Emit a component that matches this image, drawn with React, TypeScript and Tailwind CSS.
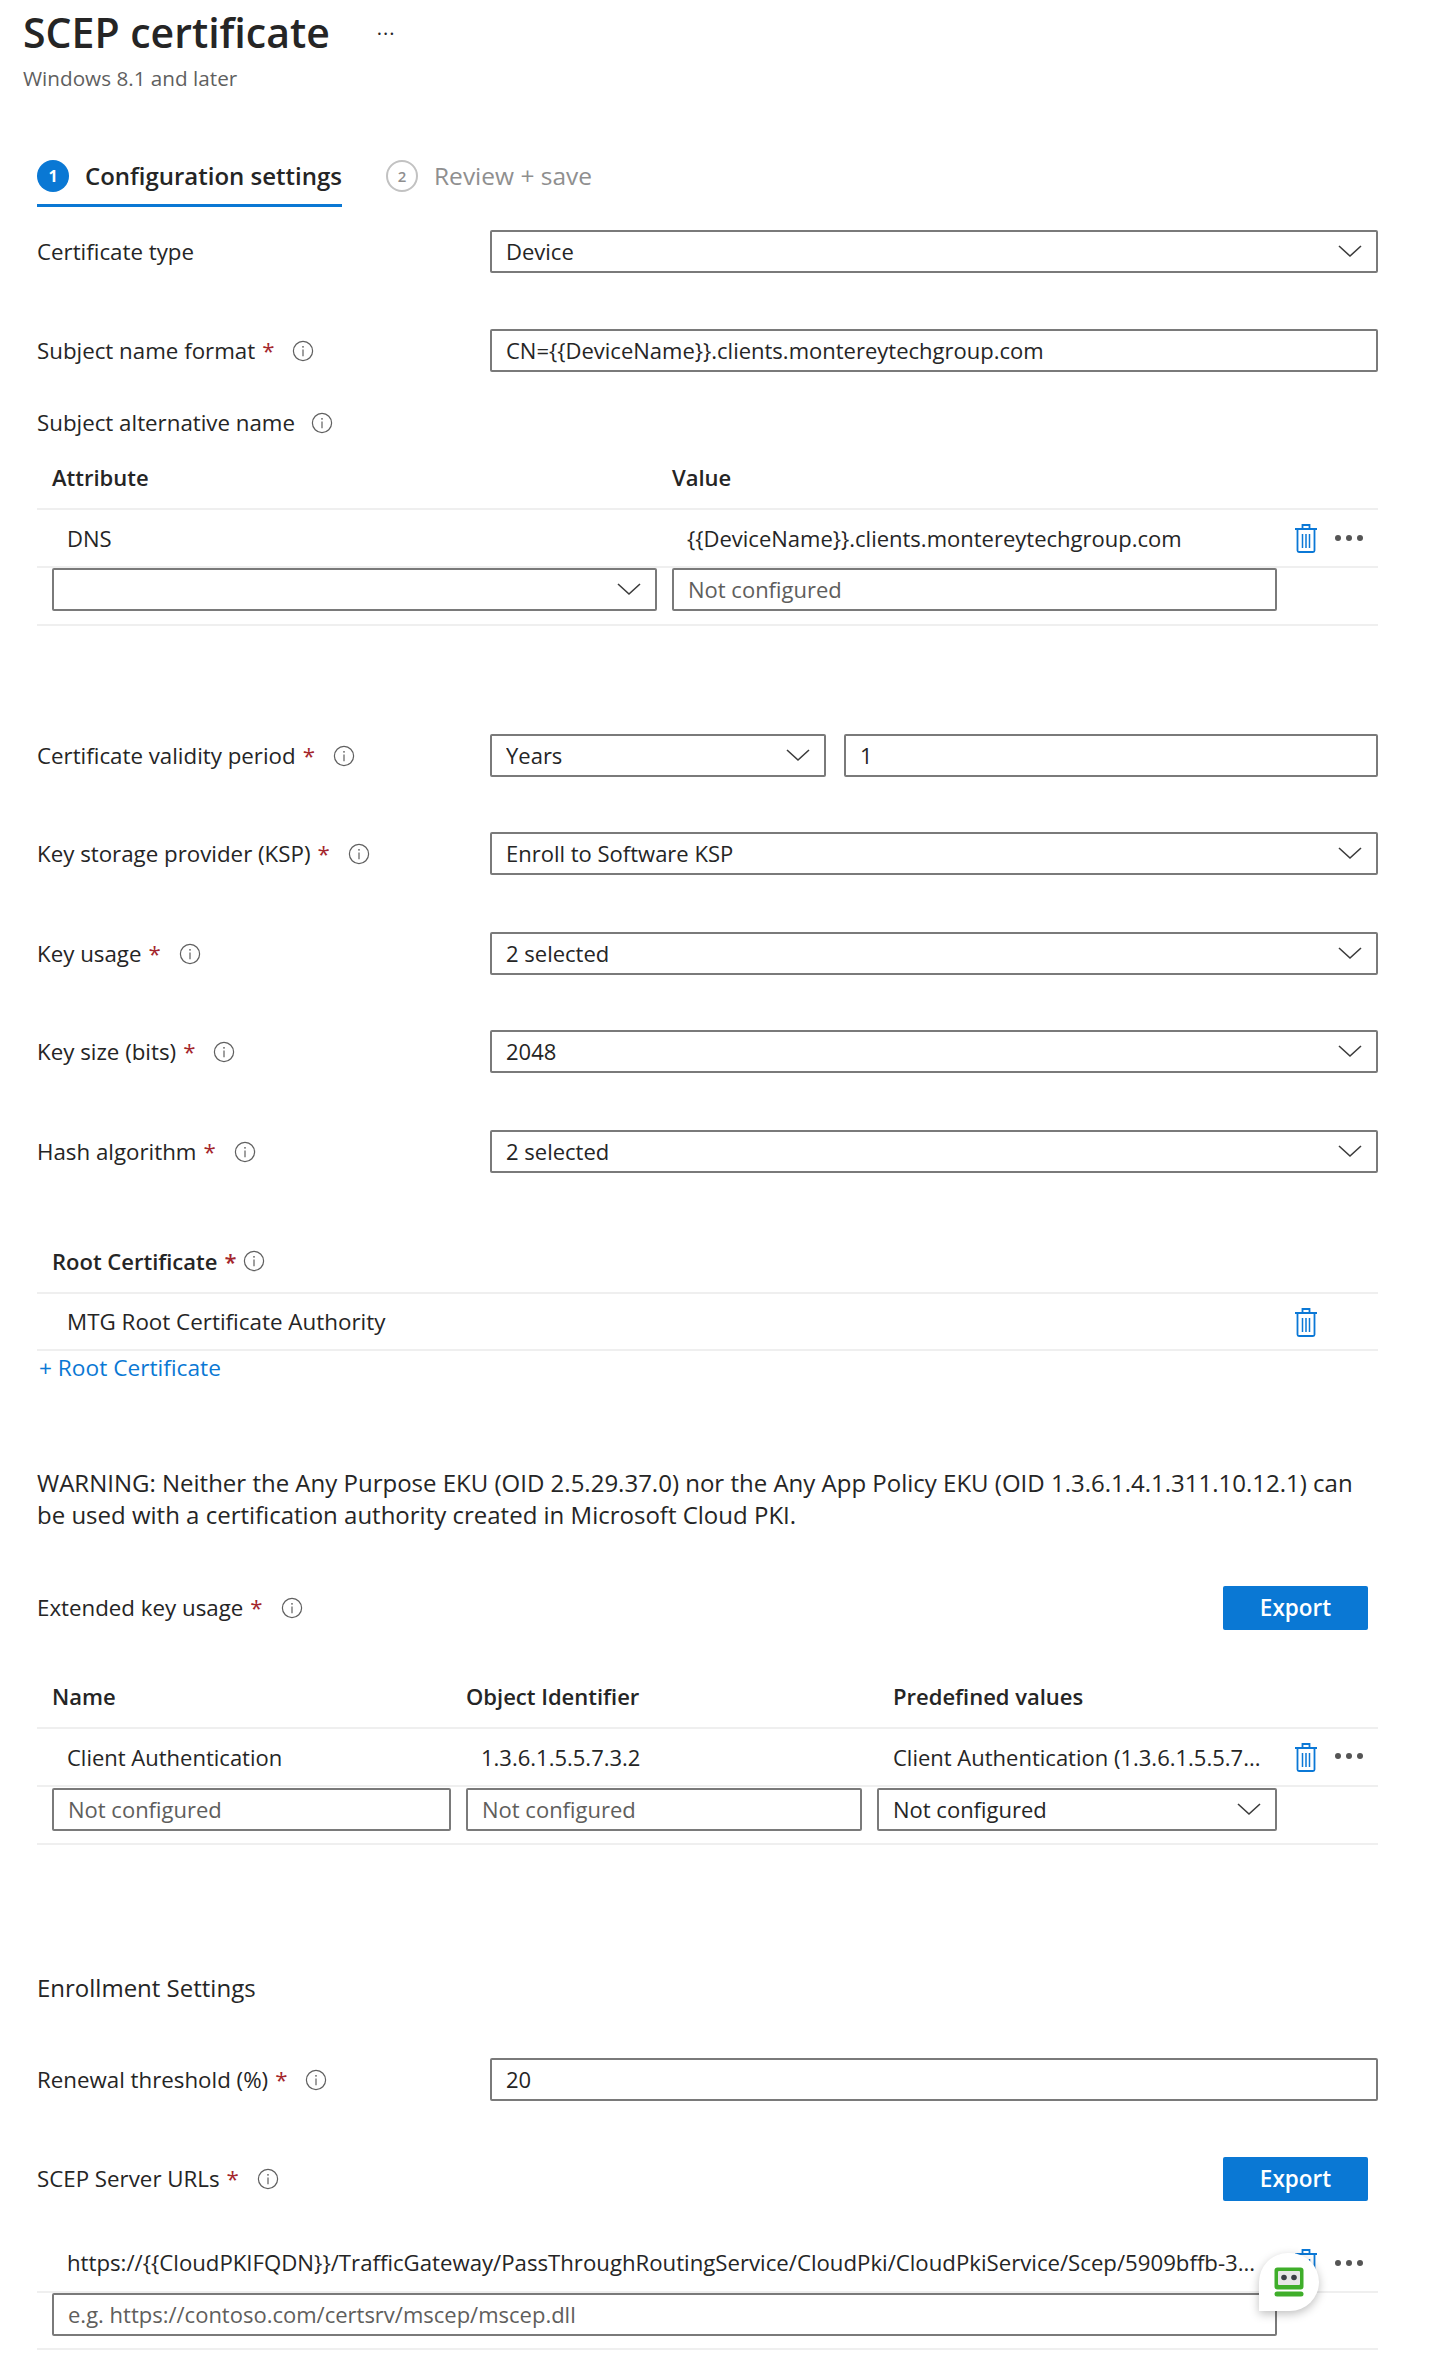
import React from "react";

const Info = ({ className = "" }: { className?: string }) => (
  <svg width="22" height="22" viewBox="0 0 22 22" fill="none" className={`shrink-0 ${className}`}>
    <circle cx="11" cy="11" r="9.6" stroke="#5f5f5f" strokeWidth="1.2" />
    <circle cx="11" cy="6.8" r="0.9" fill="#5f5f5f" />
    <path d="M11 9.6v6.6" stroke="#5f5f5f" strokeWidth="1.2" />
  </svg>
);

const Chevron = () => (
  <svg width="26" height="14" viewBox="0 0 26 14" fill="none" className="shrink-0">
    <path d="M2 2l11 10L24 2" stroke="#3b3b3b" strokeWidth="1.6" />
  </svg>
);

const Trash = () => (
  <svg width="24" height="30" viewBox="0 0 24 30" fill="none" className="shrink-0">
    <path d="M1 6h22M8.5 6V2h7v4M3.5 6v21.5a1.5 1.5 0 0 0 1.5 1.5h14a1.5 1.5 0 0 0 1.5-1.5V6" stroke="#0b78d6" strokeWidth="1.8" />
    <path d="M8.5 11v14M12 11v14M15.5 11v14" stroke="#0b78d6" strokeWidth="1.5" />
  </svg>
);

const Dots = () => (
  <svg width="30" height="8" viewBox="0 0 30 8" className="shrink-0">
    <circle cx="4" cy="4" r="3" fill="#555" />
    <circle cx="15" cy="4" r="3" fill="#555" />
    <circle cx="26" cy="4" r="3" fill="#555" />
  </svg>
);

const Req = () => <span className="ml-[7px] text-[#a4262c]">*</span>;

const Box = ({ children, className = "", muted = false, chevron = false }: { children?: React.ReactNode; className?: string; muted?: boolean; chevron?: boolean }) => (
  <div className={`flex h-[43px] items-center justify-between rounded-[2px] border-2 border-[#7a7a7a] bg-white pb-[2px] pl-[14px] pr-[13px] ${muted ? "text-[#605e5c]" : "text-[#252525]"} ${className}`}>
    <span className="truncate">{children}</span>
    {chevron && <Chevron />}
  </div>
);

const Field = ({ label, req, gap = 18, info = true, className = "", children }: { label: string; req?: boolean; gap?: number; info?: boolean; className?: string; children: React.ReactNode }) => (
  <div className={`grid grid-cols-[453px_888px] items-center ${className}`}>
    <div className="flex items-center text-[22.3px]">
      <span>{label}</span>
      {req && <Req />}
      {info && <span style={{ width: gap }} />}
      {info && <Info />}
    </div>
    <div className="text-[22px]">{children}</div>
  </div>
);

const Divider = () => <div className="h-[2px] bg-[#efefef]" />;

const ExportBtn = () => (
  <div className="flex h-[44px] w-[145px] items-center justify-center rounded-[2px] bg-[#0a78d4] text-[22.5px] font-semibold text-white">Export</div>
);

export default function App() {
  return (
    <div className="h-[2373px] w-[1435px] overflow-hidden bg-white font-['Open_Sans','Noto_Sans',sans-serif] text-[22px] leading-[28px] text-[#252525]">
      <div className="flex h-[53px] items-center pl-[23px] pt-[11px]">
        <h1 className="text-[41px] font-semibold leading-[50px]">SCEP certificate</h1>
        <span className="ml-[47px] pt-[3px] text-[20px] leading-[50px] tracking-[0.05em]">···</span>
      </div>
      <div className="pl-[23px] pt-[10px] text-[20.7px] leading-[30px] text-[#5f5f5f]">Windows 8.1 and later</div>

      <div className="ml-[37px] mt-[67px] w-[1341px]">
        <div className="flex h-[47px] items-start gap-[44px]">
          <div className="flex h-[47px] w-[305px] items-start gap-[16px] border-b-[3px] border-[#0a78d4]">
            <span className="flex h-[32px] w-[32px] items-center justify-center rounded-full bg-[#0a78d4] text-[16px] font-bold text-white">1</span>
            <span className="whitespace-nowrap text-[24px] font-semibold leading-[32px]">Configuration settings</span>
          </div>
          <div className="flex items-start gap-[16px] text-[#8f8f8f]">
            <span className="flex h-[32px] w-[32px] items-center justify-center rounded-full border-2 border-[#c2c2c2] text-[15px] font-semibold">2</span>
            <span className="text-[24.5px] leading-[32px]">Review + save</span>
          </div>
        </div>

        <Field label="Certificate type" className="mt-[23px]" info={false}>
          <Box chevron>Device</Box>
        </Field>
        <Field label="Subject name format" req className="mt-[56px]">
          <Box>{"CN={{DeviceName}}.clients.montereytechgroup.com"}</Box>
        </Field>

        <div className="mt-[37px] flex h-[28px] items-center text-[22.3px]">
          <span>Subject alternative name</span>
          <span className="w-[16px]" />
          <Info />
        </div>

        <div className="mt-[26px] grid h-[28px] grid-cols-[620px_1fr] pl-[15px] font-semibold">
          <span>Attribute</span>
          <span>Value</span>
        </div>
        <div className="mt-[17px]"><Divider /></div>
        <div className="relative flex h-[56px] items-center pl-[30px]">
          <span className="w-[620px]">DNS</span>
          <span>{"{{DeviceName}}.clients.montereytechgroup.com"}</span>
          <div className="absolute left-[1257px] top-[13px]"><Trash /></div>
          <div className="absolute left-[1297px] top-[24px]"><Dots /></div>
        </div>
        <Divider />
        <div className="grid grid-cols-[605px_605px] gap-[15px] pl-[15px]">
          <Box chevron />
          <Box muted>Not configured</Box>
        </div>
        <div className="mt-[13px]"><Divider /></div>

        <Field label="Certificate validity period" req className="mt-[108px]">
          <div className="grid grid-cols-[336px_534px] gap-[18px]">
            <Box chevron>Years</Box>
            <Box>1</Box>
          </div>
        </Field>
        <Field label="Key storage provider (KSP)" req className="mt-[55px]">
          <Box chevron>Enroll to Software KSP</Box>
        </Field>
        <Field label="Key usage" req className="mt-[57px]">
          <Box chevron>2 selected</Box>
        </Field>
        <Field label="Key size (bits)" req className="mt-[55px]">
          <Box chevron>2048</Box>
        </Field>
        <Field label="Hash algorithm" req className="mt-[57px]">
          <Box chevron>2 selected</Box>
        </Field>

        <div className="mt-[74px] flex h-[28px] items-center pl-[15px] font-semibold">
          <span>Root Certificate</span>
          <Req />
          <span className="w-[6px]" />
          <Info />
        </div>
        <div className="mt-[17px]"><Divider /></div>
        <div className="relative flex h-[55px] items-center pl-[30px] text-[22.4px]">
          <span>MTG Root Certificate Authority</span>
          <div className="absolute left-[1257px] top-[13px]"><Trash /></div>
        </div>
        <Divider />
        <div className="pl-[2px] pt-[3px] text-[22.7px] text-[#0a78d4]">+ Root Certificate</div>

        <div className="mt-[85px] text-[24px] leading-[32px]">
          WARNING: Neither the Any Purpose EKU (OID 2.5.29.37.0) nor the Any App Policy EKU (OID 1.3.6.1.4.1.311.10.12.1) can<br />
          be used with a certification authority created in Microsoft Cloud PKI.
        </div>

        <div className="mt-[55px] flex h-[44px] items-center justify-between pr-[10px]">
          <div className="flex items-center text-[22.3px]">
            <span>Extended key usage</span>
            <Req />
            <span className="w-[18px]" />
            <Info />
          </div>
          <ExportBtn />
        </div>

        <div className="mt-[52px] grid h-[28px] grid-cols-[414px_427px_1fr] pl-[15px] font-semibold">
          <span>Name</span>
          <span>Object Identifier</span>
          <span>Predefined values</span>
        </div>
        <div className="mt-[17px]"><Divider /></div>
        <div className="relative grid h-[56px] grid-cols-[414px_412px_1fr] items-center pl-[30px]">
          <span>Client Authentication</span>
          <span>1.3.6.1.5.5.7.3.2</span>
          <span className="whitespace-nowrap">Client Authentication (1.3.6.1.5.5.7...</span>
          <div className="absolute left-[1257px] top-[13px]"><Trash /></div>
          <div className="absolute left-[1297px] top-[23px]"><Dots /></div>
        </div>
        <Divider />
        <div className="grid grid-cols-[399px_396px_400px] gap-[15px] pl-[15px] pt-[1px]">
          <Box muted>Not configured</Box>
          <Box muted>Not configured</Box>
          <Box chevron>Not configured</Box>
        </div>
        <div className="mt-[12px]"><Divider /></div>

        <div className="mt-[128px] h-[30px] text-[24px] leading-[30px]">Enrollment Settings</div>

        <Field label="Renewal threshold (%)" req className="mt-[55px]">
          <Box>20</Box>
        </Field>

        <div className="mt-[56px] flex h-[44px] items-center justify-between pr-[10px]">
          <div className="flex items-center text-[22.3px]">
            <span>SCEP Server URLs</span>
            <Req />
            <span className="w-[18px]" />
            <Info />
          </div>
          <ExportBtn />
        </div>

        <div className="relative mt-[34px] flex h-[56px] items-center pl-[30px] text-[22.2px]">
          <span className="whitespace-nowrap">{"https://{{CloudPKIFQDN}}/TrafficGateway/PassThroughRoutingService/CloudPki/CloudPkiService/Scep/5909bffb-3..."}</span>
          <div className="absolute left-[1257px] top-[13px]"><Trash /></div>
          <div className="absolute left-[1297px] top-[24px]"><Dots /></div>
        </div>
        <Divider />
        <div className="pl-[15px]">
          <Box muted className="w-[1225px]">e.g. https://contoso.com/certsrv/mscep/mscep.dll</Box>
        </div>
        <div className="mt-[12px]"><Divider /></div>
      </div>

      <div className="absolute left-[1259px] top-[2253px] flex h-[58px] w-[60px] items-center justify-center rounded-[30px] rounded-bl-none bg-white shadow-[0_3px_10px_rgba(0,0,0,0.25)]">
        <svg width="30" height="30" viewBox="0 0 30 30">
          <rect x="0.5" y="0.5" width="29" height="22" rx="3" fill="#3fae2a" />
          <rect x="4" y="4" width="22" height="14" rx="1" fill="#e7e7e7" />
          <circle cx="10" cy="10.5" r="2.8" fill="#3b3f46" />
          <circle cx="20" cy="10.5" r="2.8" fill="#3b3f46" />
          <rect x="0.5" y="24.5" width="29" height="5" rx="2.5" fill="#3fae2a" />
        </svg>
      </div>
    </div>
  );
}
